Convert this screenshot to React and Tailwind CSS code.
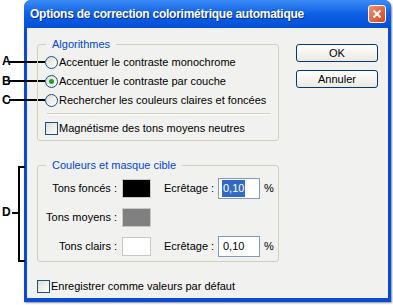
const font = { fontFamily: '"Liberation Sans", Arial, sans-serif' };

function Radio({ checked }) {
  return (
    <span className="relative flex h-[13px] w-[13px] shrink-0 items-center justify-center rounded-full border border-[#1c5180] bg-gradient-to-br from-[#dcdcd7] to-white">
      {checked && <span className="h-[5px] w-[5px] rounded-full bg-[#21a121]" />}
    </span>
  );
}

function Check() {
  return <span className="h-[13px] w-[13px] shrink-0 border border-[#1c5180] bg-gradient-to-br from-[#dcdcd7] to-white" />;
}

function GroupBox({ title, children, className }) {
  return (
    <div className={`relative rounded-[3px] border border-[#d0d0bf] ${className}`}>
      <span className="absolute -top-[8px] left-[8px] bg-[#f1f1ef] px-[6px] text-[11px] leading-[14px] text-[#0046d5]">{title}</span>
      {children}
    </div>
  );
}

function Button({ children }) {
  return (
    <button className="h-[18px] w-[82px] rounded-[3px] border border-[#003c74] bg-gradient-to-b from-white to-[#ece9e0] text-[11px] leading-[14px] text-black">
      {children}
    </button>
  );
}

function Swatch({ color }) {
  return <span className={`h-[19px] w-[29px] border border-[#c8c8c4] ${color}`} />;
}

function Clip({ selected }) {
  return (
    <div className="flex items-center">
      <span className="w-[54px]">Ecrêtage :</span>
      <span className="flex h-[21px] w-[42px] items-center border border-[#7f9db9] bg-white pl-[3px]">
        <span className={selected ? 'bg-[#316ac5] px-[1px] text-white' : 'px-[1px]'}>0,10</span>
      </span>
      <span className="ml-[4px]">%</span>
    </div>
  );
}

export default function App() {
  return (
    <div className="relative h-[305px] w-[393px] overflow-hidden bg-white text-[11px] text-black" style={font}>
      {/* callouts */}
      <div className="absolute left-[2px] top-[55px] text-[12px] font-bold leading-[12px]">A</div>
      <div className="absolute left-[9px] top-[61px] h-[2px] w-[36px] bg-black" />
      <div className="absolute left-[2px] top-[75px] text-[12px] font-bold leading-[12px]">B</div>
      <div className="absolute left-[9px] top-[80px] h-[2px] w-[36px] bg-black" />
      <div className="absolute left-[2px] top-[94px] text-[12px] font-bold leading-[12px]">C</div>
      <div className="absolute left-[9px] top-[99px] h-[2px] w-[36px] bg-black" />
      <div className="absolute left-[2px] top-[206px] text-[12px] font-bold leading-[12px]">D</div>
      <div className="absolute left-[12px] top-[212px] h-[2px] w-[6px] bg-black" />
      <div className="absolute left-[18px] top-[166px] h-[96px] w-[7px] border-y-2 border-l-2 border-black" />

      <div className="ml-[24px] flex h-[302px] w-[367px] flex-col rounded-t-[7px] bg-[#0a4bd6] shadow-[1px_1px_2px_rgba(0,0,0,0.45)]">
        {/* title bar */}
        <div className="flex h-[28px] items-center justify-between rounded-t-[7px] bg-gradient-to-b from-[#3b8cf6] via-[#0d5fe4] to-[#0550d8] pl-[6px] pr-[5px]">
          <span className="text-[12px] font-bold leading-none tracking-[-0.25px] text-white" style={{ textShadow: '1px 1px 0 #0a2e8c' }}>
            Options de correction colorimétrique automatique
          </span>
          <span className="flex h-[18px] w-[18px] items-center justify-center rounded-[3px] border border-white bg-gradient-to-br from-[#f0906c] to-[#d2431a]">
            <svg width="10" height="10" viewBox="0 0 10 10">
              <path d="M1.5 1.5 L8.5 8.5 M8.5 1.5 L1.5 8.5" stroke="white" strokeWidth="2" />
            </svg>
          </span>
        </div>

        {/* body */}
        <div className="mx-[3px] mb-[4px] flex flex-1 flex-col bg-[#f1f1ef] px-[10px] pt-[16px]">
          <div className="flex">
            <div className="flex w-[243px] flex-col">
              <GroupBox title="Algorithmes" className="h-[97px] pl-[7px] pt-[11px]">
                <div className="flex flex-col gap-[6px]">
                  <div className="flex h-[13px] items-center gap-[1px]"><Radio /><span>Accentuer le contraste monochrome</span></div>
                  <div className="flex h-[13px] items-center gap-[1px]"><Radio checked /><span>Accentuer le contraste par couche</span></div>
                  <div className="flex h-[13px] items-center gap-[1px]"><Radio /><span>Rechercher les couleurs claires et foncées</span></div>
                </div>
                <div className="ml-[2px] mt-[6px] h-[2px] w-[224px] border-t border-b border-t-[#d0d0bf] border-b-white" />
                <div className="mt-[7px] flex h-[13px] items-center gap-[1px]"><Check /><span>Magnétisme des tons moyens neutres</span></div>
              </GroupBox>

              <GroupBox title="Couleurs et masque cible" className="mt-[24px] h-[97px] pt-[12px]">
                <div className="grid grid-cols-[79px_29px_auto] items-center gap-x-[5px] gap-y-[9px]">
                  <span className="text-right">Tons foncés :</span>
                  <Swatch color="bg-black" />
                  <div className="ml-[8px]"><Clip selected /></div>
                  <span className="text-right">Tons moyens :</span>
                  <Swatch color="bg-[#808080]" />
                  <span />
                  <span className="text-right">Tons clairs :</span>
                  <Swatch color="bg-white" />
                  <div className="ml-[8px]"><Clip /></div>
                </div>
              </GroupBox>
            </div>

            <div className="ml-[17px] flex flex-col gap-[8px]">
              <Button>OK</Button>
              <Button>Annuler</Button>
            </div>
          </div>

          <div className="mt-[16px] flex items-center gap-[1px]">
            <Check />
            <span>Enregistrer comme valeurs par défaut</span>
          </div>
        </div>
      </div>
    </div>
  );
}
